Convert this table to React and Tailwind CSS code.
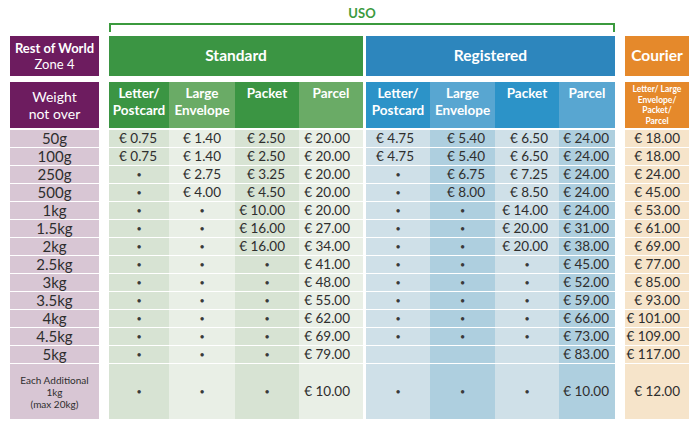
import React from "react";

const cols = [
  { m: "ml-[10px]", w: "w-[60px]", head: "bg-[#3b9543]", cell: "bg-[#d7e3d3]", pr: "pr-[12px]", h: ["Letter/", "Postcard"] },
  { m: "", w: "w-[66px]", head: "bg-[#6aab66]", cell: "bg-[#e9efe6]", pr: "pr-[14px]", h: ["Large", "Envelope"] },
  { m: "", w: "w-[64px]", head: "bg-[#3b9543]", cell: "bg-[#d7e3d3]", pr: "pr-[14px]", h: ["Packet"] },
  { m: "", w: "w-[64px]", head: "bg-[#6aab66]", cell: "bg-[#e9efe6]", pr: "pr-[13px]", h: ["Parcel"] },
  { m: "ml-[3px]", w: "w-[64px]", head: "bg-[#2c93c8]", cell: "bg-[#cfe0e8]", pr: "pr-[16px]", h: ["Letter/", "Postcard"] },
  { m: "", w: "w-[65px]", head: "bg-[#58a6d1]", cell: "bg-[#aecfdf]", pr: "pr-[10px]", h: ["Large", "Envelope"] },
  { m: "", w: "w-[64px]", head: "bg-[#2c93c8]", cell: "bg-[#cfe0e8]", pr: "pr-[11px]", h: ["Packet"] },
  { m: "", w: "w-[56px]", head: "bg-[#58a6d1]", cell: "bg-[#aecfdf]", pr: "pr-[6px]", h: ["Parcel"] },
  { m: "ml-[10px]", w: "w-[64px]", head: "bg-[#e5892b]", cell: "bg-[#f6e4ca]", pr: "pr-[9px]", h: null },
];

const B = "•";
const rows = [
  ["50g", "€ 0.75", "€ 1.40", "€ 2.50", "€ 20.00", "€ 4.75", "€ 5.40", "€ 6.50", "€ 24.00", "€ 18.00"],
  ["100g", "€ 0.75", "€ 1.40", "€ 2.50", "€ 20.00", "€ 4.75", "€ 5.40", "€ 6.50", "€ 24.00", "€ 18.00"],
  ["250g", B, "€ 2.75", "€ 3.25", "€ 20.00", B, "€ 6.75", "€ 7.25", "€ 24.00", "€ 24.00"],
  ["500g", B, "€ 4.00", "€ 4.50", "€ 20.00", B, "€ 8.00", "€ 8.50", "€ 24.00", "€ 45.00"],
  ["1kg", B, B, "€ 10.00", "€ 20.00", B, B, "€ 14.00", "€ 24.00", "€ 53.00"],
  ["1.5kg", B, B, "€ 16.00", "€ 27.00", B, B, "€ 20.00", "€ 31.00", "€ 61.00"],
  ["2kg", B, B, "€ 16.00", "€ 34.00", B, B, "€ 20.00", "€ 38.00", "€ 69.00"],
  ["2.5kg", B, B, B, "€ 41.00", B, B, B, "€ 45.00", "€ 77.00"],
  ["3kg", B, B, B, "€ 48.00", B, B, B, "€ 52.00", "€ 85.00"],
  ["3.5kg", B, B, B, "€ 55.00", B, B, B, "€ 59.00", "€ 93.00"],
  ["4kg", B, B, B, "€ 62.00", B, B, B, "€ 66.00", "€ 101.00"],
  ["4.5kg", B, B, B, "€ 69.00", B, B, B, "€ 73.00", "€ 109.00"],
  ["5kg", B, B, B, "€ 79.00", "", "", "", "€ 83.00", "€ 117.00"],
];
const last = [B, B, B, "€ 10.00", B, B, B, "€ 10.00", "€ 12.00"];

function Cell({ c, v, tall }) {
  const base = `${c.m} ${c.w} ${c.cell} flex items-center ${tall ? "" : "border-b border-white"}`;
  if (v === B) {
    return (
      <div className={`${base} justify-center`}>
        <span className="text-[9px] leading-[9px] text-[#3a3a3a]">•</span>
      </div>
    );
  }
  return <div className={`${base} justify-end ${c.pr}`}>{v}</div>;
}

export default function App() {
  return (
    <div className="w-[700px] h-[433px] bg-white pl-[10px] font-['Lato',sans-serif] text-[#2e2e2e]">
      {/* USO bracket */}
      <div className="h-[36px] flex">
        <div className="w-[99px]" />
        <div className="w-[506px] flex flex-col items-center">
          <div className="mt-[6px] text-[13px] leading-[15px] font-bold text-[#3b9a3e]">USO</div>
          <div className="mt-[2px] w-full h-[9px] border-t-2 border-x-2 border-[#3b9a3e]" />
        </div>
      </div>

      {/* group header */}
      <div className="flex h-[40px] text-white">
        <div className="w-[89px] bg-[#6d1c5f] flex flex-col items-center justify-center text-[13px] leading-[16px]">
          <div className="font-bold">Rest of World</div>
          <div>Zone 4</div>
        </div>
        <div className="ml-[10px] w-[254px] bg-[#3b9543] flex items-center justify-center text-[15.5px] font-bold">Standard</div>
        <div className="ml-[3px] w-[249px] bg-[#2d86bd] flex items-center justify-center text-[15.5px] font-bold">Registered</div>
        <div className="ml-[10px] w-[64px] bg-[#e5892b] flex items-center justify-center text-[15.5px] font-bold">Courier</div>
      </div>

      {/* sub header */}
      <div className="flex h-[46px] mt-[6px] text-white">
        <div className="w-[89px] bg-[#6d1c5f] flex flex-col items-center justify-center text-[14px] leading-[17px]">
          <div>Weight</div>
          <div>not over</div>
        </div>
        {cols.map((c, i) =>
          c.h ? (
            <div key={i} className={`${c.m} ${c.w} ${c.head} flex flex-col items-center pt-[3px] text-[13.5px] leading-[17px] font-bold`}>
              {c.h.map((t) => (
                <div key={t}>{t}</div>
              ))}
            </div>
          ) : (
            <div key={i} className={`${c.m} ${c.w} ${c.head} flex flex-col items-center justify-center text-[8.5px] leading-[10.5px] font-bold text-center`}>
              <div>Letter/ Large</div>
              <div>Envelope/</div>
              <div>Packet/</div>
              <div>Parcel</div>
            </div>
          )
        )}
      </div>

      {/* data */}
      <div className="mt-[2px] text-[13.5px]">
        {rows.map((r) => (
          <div key={r[0]} className="flex h-[18px]">
            <div className="w-[89px] bg-[#d8c6d4] border-b border-white flex items-center justify-center text-[15px]">
              {r[0]}
            </div>
            {cols.map((c, i) => (
              <Cell key={i} c={c} v={r[i + 1]} />
            ))}
          </div>
        ))}
        <div className="flex h-[55px]">
          <div className="w-[89px] bg-[#d8c6d4] flex flex-col items-center justify-center text-[10px] leading-[12px] text-center">
            <div>Each Additional</div>
            <div>1kg</div>
            <div>(max 20kg)</div>
          </div>
          {cols.map((c, i) => (
            <Cell key={i} c={c} v={last[i]} tall />
          ))}
        </div>
      </div>
    </div>
  );
}
